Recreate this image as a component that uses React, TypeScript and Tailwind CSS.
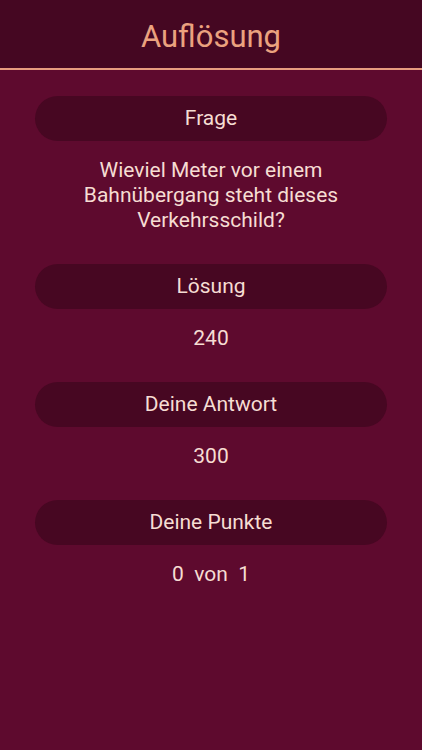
const font = { fontFamily: "Roboto, 'Noto Sans', sans-serif" };

function Pill({ label }: { label: string }) {
  return (
    <div className="flex h-[45px] items-center justify-center rounded-full bg-[#470722] text-[21px] text-[#f6ddd3]">
      {label}
    </div>
  );
}

function Value({ children }: { children: React.ReactNode }) {
  return (
    <div className="pt-[17px] pb-[31px] text-center text-[21px] leading-[25px] text-[#f6ddd3]">
      {children}
    </div>
  );
}

export default function App() {
  return (
    <div className="flex min-h-[750px] flex-col bg-[#5e0a2e]" style={font}>
      <header className="flex h-[70px] items-center justify-center border-b-2 border-[#e79c80] bg-[#450722] pt-1.5">
        <h1 className="text-[31px] text-[#eba27f]">Auflösung</h1>
      </header>
      <main className="px-[35px] pt-[26px]">
        <Pill label="Frage" />
        <Value>
          Wieviel Meter vor einem
          <br />
          Bahnübergang steht dieses
          <br />
          Verkehrsschild?
        </Value>
        <Pill label="Lösung" />
        <Value>240</Value>
        <Pill label="Deine Antwort" />
        <Value>300</Value>
        <Pill label="Deine Punkte" />
        <Value>0&nbsp; von&nbsp; 1</Value>
      </main>
    </div>
  );
}
